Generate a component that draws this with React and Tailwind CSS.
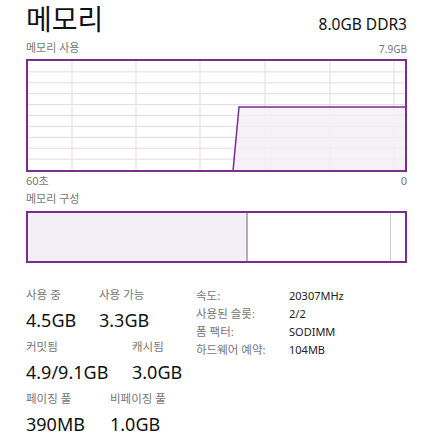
const font = { fontFamily: '"Noto Sans", "Noto Sans CJK KR", sans-serif' };

const PURPLE = '#7b2d8e';
const FILL = '#f4eff6';
const GRID = '#e3d8e6';

function UsageGraph() {
    const verticals = [44, 108, 172, 237, 302, 366];
    const horizontals = Array.from({ length: 9 }, (_, i) => ((i + 1) * 109) / 10);
    return (
        <div className="h-[113px] w-full border-2 border-[#7b2d8e]">
            <svg className="block h-full w-full" viewBox="0 0 377 109" preserveAspectRatio="none">
                {horizontals.map((y) => (
                    <line key={'h' + y} x1="0" x2="377" y1={y} y2={y} stroke={GRID} strokeWidth="1" />
                ))}
                {verticals.map((x) => (
                    <line key={'v' + x} x1={x} x2={x} y1="0" y2="109" stroke={GRID} strokeWidth="1" />
                ))}
                <polygon points="205,109 211,46 377,46 377,109" fill={FILL} fillOpacity="0.85" />
                <polyline points="205,110 211,46 378,46" fill="none" stroke={PURPLE} strokeWidth="1.5" />
            </svg>
        </div>
    );
}

function Composition() {
    return (
        <div className="flex h-[52px] w-full border-2 border-[#7b2d8e]">
            <div className="w-[218px] bg-[#f4eff6]" />
            <div className="w-[2px] bg-[#baa8c3]" />
            <div className="w-[142px]" />
            <div className="w-[1px] bg-[#d6c7dc]" />
            <div className="flex-1" />
        </div>
    );
}

function StatPair({ items, firstWidth, top }) {
    return (
        <div className={top}>
            <div className="flex">
                <p className={`${firstWidth} text-[11.5px] leading-[16px] text-[#767676]`}>{items[0][0]}</p>
                <p className="text-[11.5px] leading-[16px] text-[#767676]">{items[1][0]}</p>
            </div>
            <div className="mt-[5px] flex">
                <p className={`${firstWidth} text-[18px] leading-[24px] text-[#111]`}>{items[0][1]}</p>
                <p className="text-[18px] leading-[24px] text-[#111]">{items[1][1]}</p>
            </div>
        </div>
    );
}

const specs = [
    ['속도:', '20307MHz'],
    ['사용된 슬롯:', '2/2'],
    ['폼 팩터:', 'SODIMM'],
    ['하드웨어 예약:', '104MB'],
];

export default function App() {
    return (
        <div className="h-[446px] w-[430px] overflow-hidden bg-white pl-[26px] pr-[23px] pt-[5px]" style={font}>
            <div className="flex h-[30px] items-baseline justify-between">
                <h1 className="text-[28px] leading-[28px] text-[#111]">메모리</h1>
                <span className="text-[15.5px] leading-[18px] text-[#111]">8.0GB DDR3</span>
            </div>

            <div className="mt-[6px] mb-[4px] flex h-[14px] items-end justify-between">
                <span className="text-[11px] leading-[14px] text-[#767676]">메모리 사용</span>
                <span className="text-[10px] leading-[12px] text-[#767676]">7.9GB</span>
            </div>

            <UsageGraph />

            <div className="mt-[2px] flex justify-between text-[11px] leading-[14px] text-[#767676]">
                <span>60초</span>
                <span>0</span>
            </div>

            <p className="mt-[4px] mb-[5px] text-[11px] leading-[14px] text-[#767676]">메모리 구성</p>

            <Composition />

            <div className="mt-[24px] flex">
                <div className="w-[170px]">
                    <StatPair items={[['사용 중', '4.5GB'], ['사용 가능', '3.3GB']]} firstWidth="w-[73px]" top="" />
                    <StatPair items={[['커밋됨', '4.9/9.1GB'], ['캐시됨', '3.0GB']]} firstWidth="w-[106px]" top="mt-[7px]" />
                    <StatPair items={[['페이징 풀', '390MB'], ['비페이징 풀', '1.0GB']]} firstWidth="w-[84px]" top="mt-[7px]" />
                </div>
                <div className="flex flex-col">
                    {specs.map(([k, v]) => (
                        <div key={k} className="flex h-[18px] items-center">
                            <span className="w-[93px] text-[11.5px] leading-[18px] text-[#767676]">{k}</span>
                            <span className="text-[11px] leading-[18px] text-[#222]">{v}</span>
                        </div>
                    ))}
                </div>
            </div>
        </div>
    );
}
